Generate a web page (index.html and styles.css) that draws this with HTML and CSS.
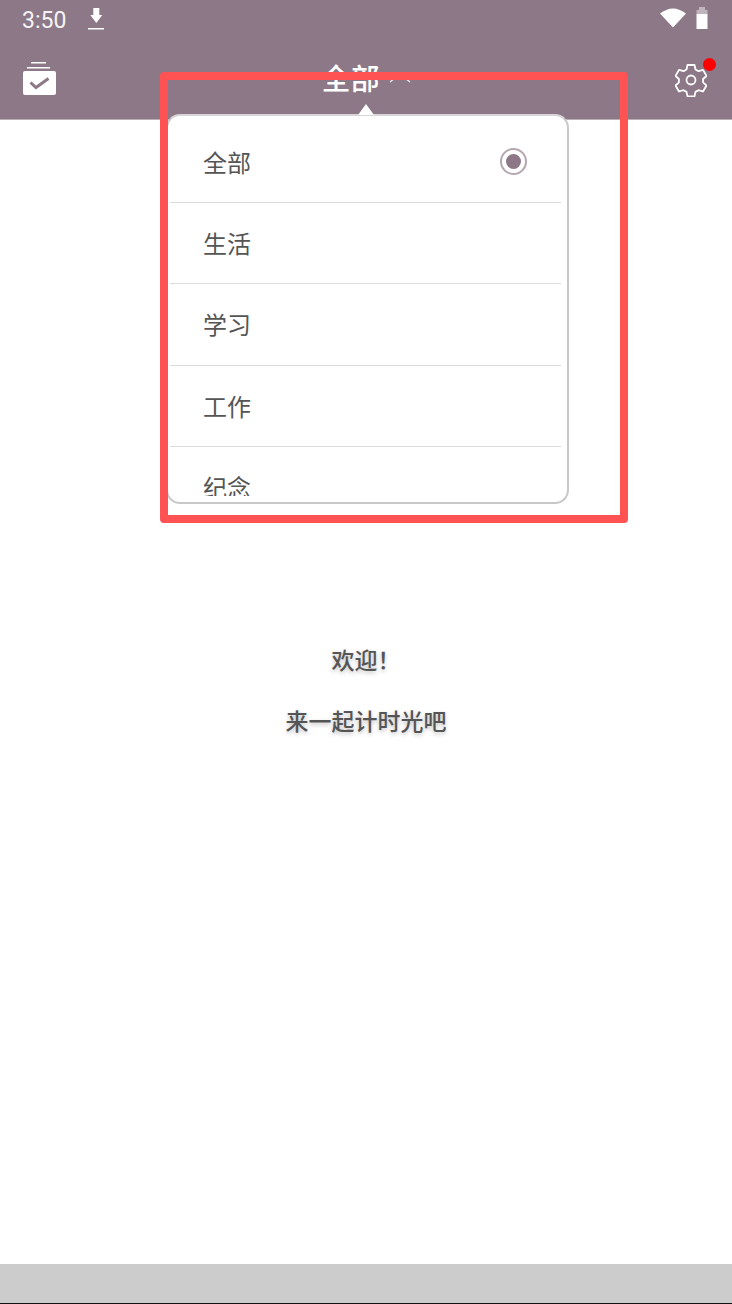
FILE: index.html
```html
<!DOCTYPE html>
<html lang="zh-CN">
<head>
  <meta charset="UTF-8" />
  <meta name="viewport" content="width=device-width, initial-scale=1.0"/>
  <title>全部</title>
  <link rel="stylesheet" href="styles.css">
</head>
<body>
  <div class="app">
    <header class="top">
      <div class="status-bar">
        <div class="status-left">
          <span class="clock">3:50</span>
          <svg class="ico-download" width="18" height="24" viewBox="0 0 18 24">
            <path d="M6.300 2h6v7h3L9.300 17 3.300 9h3z" fill="#fff"/>
            <rect x="1" y="22" width="16" height="1.500" fill="#fff"/>
          </svg>
        </div>
        <div class="status-right">
          <svg width="26" height="20" viewBox="0 0 26 20">
            <path d="M0 5.500C4 2.500 8.500 0.500 13 0.500s9 2 13 5L13 19.500z" fill="#fff"/>
          </svg>
          <svg width="14" height="22" viewBox="0 0 14 22">
            <path d="M4 0h6v3H4z" fill="#fff" opacity="0.45"/>
            <path d="M1.500 3h11v4h-11z" fill="#fff" opacity="0.45"/>
            <path d="M1.500 7h11v15h-11z" fill="#fff"/>
          </svg>
        </div>
      </div>
      <div class="toolbar">
        <svg class="ico-tasks" width="36" height="36" viewBox="0 0 36 36">
          <rect x="9" y="0" width="15" height="1.500" fill="#fff"/>
          <rect x="5" y="5" width="23" height="1.500" fill="#fff"/>
          <rect x="1" y="9" width="33" height="24" rx="2" fill="#fff"/>
          <path d="M8.500 20.500l5.500 5 12.500-9" fill="none" stroke="#8c7886" stroke-width="3"/>
        </svg>
        <div class="title">
          <span>全部</span>
          <svg class="ico-chevron" width="24" height="12" viewBox="0 0 24 12">
            <path d="M2 10l10-8 10 8" fill="none" stroke="#fff" stroke-width="1.400" opacity="0.85"/>
          </svg>
        </div>
        <div class="settings">
          <svg width="32" height="34" viewBox="0 0 32 34">
            <path d="M12.500 2h7l1 4.500 3 1.700 4.500-1.300 3.500 6-3.400 3.100v3.400l3.400 3.100-3.500 6-4.500-1.300-3 1.700-1 4.500h-7l-1-4.500-3-1.700-4.500 1.300-3.500-6 3.400-3.100v-3.400L.5 12.900l3.500-6 4.500 1.300 3-1.700z" fill="none" stroke="#fff" stroke-width="1.800" stroke-linejoin="round"/>
            <circle cx="16" cy="17" r="4.500" fill="none" stroke="#fff" stroke-width="1.800"/>
          </svg>
          <span class="badge"></span>
        </div>
      </div>
    </header>

    <main class="content">
      <p class="welcome">欢迎！</p>
      <p class="welcome">来一起计时光吧</p>
    </main>

    <footer class="bottom-bar"></footer>
  </div>

  <div class="menu">
    <span class="menu-arrow"></span>
    <ul class="menu-list">
      <li class="menu-item">全部<span class="radio"></span></li>
      <li class="menu-item">生活</li>
      <li class="menu-item">学习</li>
      <li class="menu-item">工作</li>
      <li class="menu-item">纪念</li>
    </ul>
  </div>

  <div class="highlight"></div>
</body>
</html>
```

FILE: styles.css
```css
* {
  box-sizing: border-box;
}
body {
  margin: 0;
  background: #fff;
  font-family: "Roboto", "Noto Sans CJK SC", sans-serif;
}
.app {
  height: 1304px;
  display: flex;
  flex-direction: column;
  overflow: hidden;
}
.top {
  height: 120px;
  background: #8c7886;
  border-bottom: 1px solid #b9aeb6;
  color: #fff;
}
.status-bar {
  height: 40px;
  padding: 0 22px;
  display: flex;
  justify-content: space-between;
  align-items: center;
}
.status-left {
  display: flex;
  align-items: center;
  gap: 21px;
}
.clock {
  font-size: 23px;
  color: #f6f3f5;
}
.ico-download {
  margin-top: -4px;
}
.status-right {
  display: flex;
  align-items: center;
  gap: 9px;
  margin-right: 1px;
  margin-top: -4px;
}
.toolbar {
  height: 79px;
  padding: 0 25px 0 22px;
  display: flex;
  justify-content: space-between;
  align-items: center;
}
.title {
  display: flex;
  align-items: center;
  gap: 8px;
  font-size: 29px;
  font-weight: 500;
  margin-top: -6px;
}
.ico-chevron {
  margin-top: 2px;
}
.settings {
  position: relative;
  width: 32px;
  height: 34px;
}
.badge {
  position: absolute;
  top: -5px;
  right: -9px;
  width: 13px;
  height: 13px;
  border-radius: 50%;
  background: #f00;
}
.content {
  flex: 1;
  padding-top: 528px;
  text-align: center;
}
.welcome {
  margin: 0 0 33px;
  height: 28px;
  line-height: 28px;
  font-size: 23px;
  font-weight: 500;
  color: #555;
  text-shadow: 0 2px 4px rgba(0, 0, 0, 0.25);
}
.bottom-bar {
  height: 40px;
  background: #cccccc;
  border-bottom: 1px solid #111;
}
.menu {
  position: absolute;
  left: 166px;
  top: 114px;
  width: 403px;
  height: 390px;
  padding: 6px 6px 6px 2px;
  background: #fff;
  border: 2px solid #c8c8c8;
  border-top-color: #d8d4d7;
  border-radius: 14px;
}
.menu-arrow {
  position: absolute;
  left: 190px;
  top: -12px;
  border-left: 8px solid transparent;
  border-right: 8px solid transparent;
  border-bottom: 11px solid #fff;
}
.menu-list {
  list-style: none;
  margin: 0;
  padding: 0;
  height: 374px;
  overflow: hidden;
}
.menu-item {
  height: 81.200px;
  padding: 0 33px 1px;
  display: flex;
  justify-content: space-between;
  align-items: center;
  border-bottom: 1px solid #dcdcdc;
  font-size: 24px;
  color: #555;
}
.radio {
  width: 27px;
  height: 27px;
  border: 2px solid #b3a6af;
  border-radius: 50%;
  display: flex;
  align-items: center;
  justify-content: center;
  margin-right: 1px;
}
.radio::after {
  content: "";
  width: 15px;
  height: 15px;
  border-radius: 50%;
  background: #8c7886;
}
.highlight {
  position: absolute;
  left: 160px;
  top: 72px;
  width: 468px;
  height: 451px;
  border: 8px solid #ff5252;
  border-radius: 4px;
}
```
